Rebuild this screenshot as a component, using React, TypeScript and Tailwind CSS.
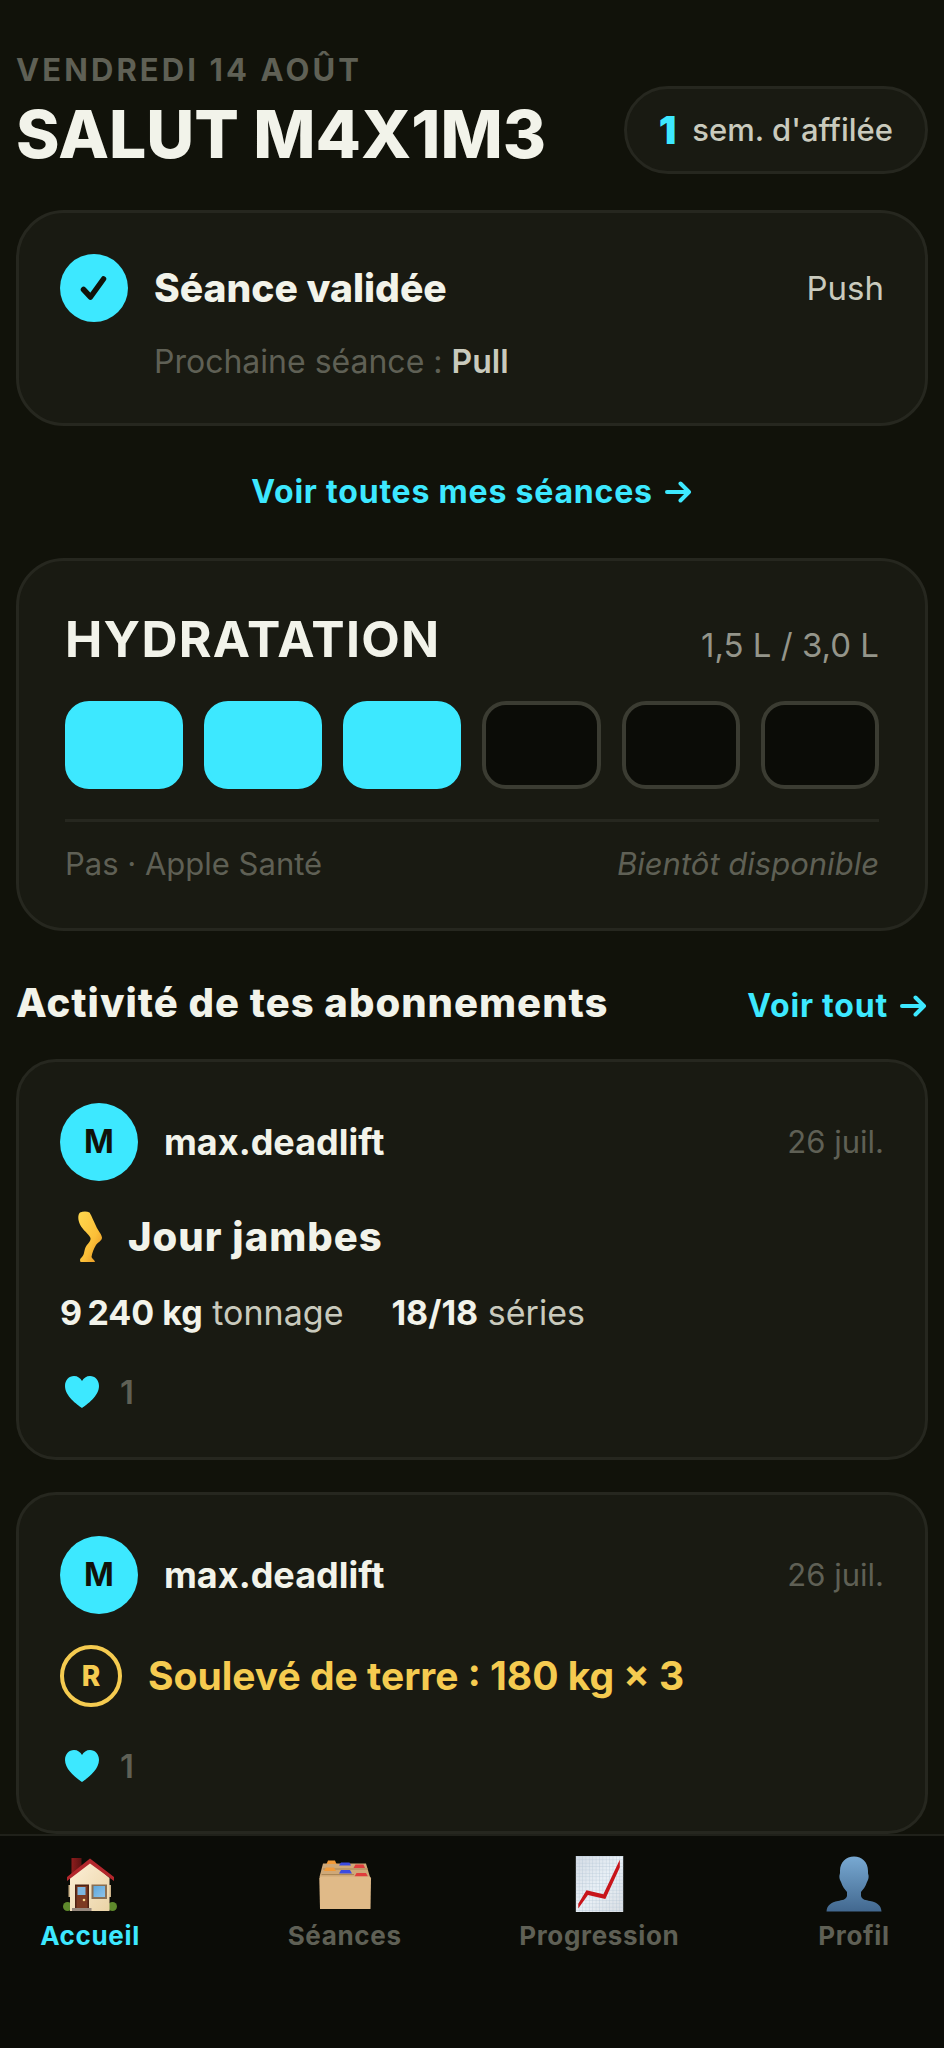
import type { ReactNode } from "react";
import clsx from "clsx";

const VERRES = 6;
const VERRES_BUS = 3;

interface Onglet {
  href: string;
  label: string;
  icon: () => ReactNode;
  actif?: boolean;
}

const ONGLETS: Onglet[] = [
  { href: "#accueil", label: "Accueil", icon: Maison, actif: true },
  { href: "#seances", label: "Séances", icon: Fichier },
  { href: "#progression", label: "Progression", icon: Courbe },
  { href: "#profil", label: "Profil", icon: Silhouette },
];

export default function App() {
  return (
    <div className="flex min-h-screen flex-col bg-[#11120a] font-['Inter',sans-serif] text-[#f2f3ea]">
      <main className="flex-1 px-4 pt-[50px]">
        <header className="flex items-end justify-between">
          <div>
            <p className="text-[31px] leading-10 font-bold tracking-widest text-[#5f6055] uppercase">
              Vendredi 14 août
            </p>
            <h1 className="mt-1 text-[66px] leading-20 font-extrabold whitespace-nowrap">
              SALUT M4X1M3
            </h1>
          </div>
          <p className="flex h-22 items-center gap-4 rounded-full border-3 border-[#26271f] bg-[#191a12] px-8 whitespace-nowrap">
            <span className="text-[39px] leading-10 font-black text-[#3de8ff]">1</span>
            <span className="text-[31px] leading-10 font-medium text-[#c9cabd]">sem. d'affilée</span>
          </p>
        </header>

        <section className="mt-9 rounded-[48px] border-3 border-[#26271f] bg-[#191a12] p-[41px]">
          <div className="flex items-center">
            <span className="grid size-17 place-items-center rounded-full bg-[#3de8ff]">
              <svg viewBox="0 0 68 68" className="size-17" aria-hidden="true">
                <path
                  d="M23.5 35.5 L30.5 43 L43.5 25"
                  fill="none"
                  stroke="#11120a"
                  strokeWidth="5.5"
                  strokeLinecap="round"
                  strokeLinejoin="round"
                />
              </svg>
            </span>
            <h2 className="ml-[26px] text-[39px] leading-12 font-extrabold">Séance validée</h2>
            <span className="ml-auto text-[33px] leading-10 text-[#c9cabd]">Push</span>
          </div>
          <p className="mt-5 ml-[94px] text-[32px] leading-10 text-[#5f6055]">
            Prochaine séance : <strong className="font-semibold text-[#c9cabd]">Pull</strong>
          </p>
        </section>

        <a
          href="#seances"
          className="mx-auto my-[46px] flex w-fit items-center gap-3 text-[32px] leading-10 font-bold tracking-wide text-[#3de8ff]"
        >
          Voir toutes mes séances
          <Fleche />
        </a>

        <section className="rounded-[48px] border-3 border-[#26271f] bg-[#191a12] px-[46px] pt-12 pb-11">
          <div className="flex items-baseline justify-between">
            <h2 className="text-[50px] leading-15 font-bold tracking-wide">HYDRATATION</h2>
            <span className="text-[33px] leading-10 text-[#94958a]">1,5 L / 3,0 L</span>
          </div>
          <div className="mt-8 grid grid-cols-6 gap-[21px]">
            {Array.from({ length: VERRES }, (_, i) => (
              <button
                key={i}
                type="button"
                aria-label={`Verre ${i + 1}`}
                aria-pressed={i < VERRES_BUS}
                className={clsx(
                  "h-22 rounded-3xl border-4",
                  i < VERRES_BUS ? "border-[#3de8ff] bg-[#3de8ff]" : "border-[#3b3c32] bg-[#0b0c07]",
                )}
              />
            ))}
          </div>
          <div className="mt-[30px] flex justify-between border-t-3 border-[#26271f] pt-[22px] text-[31px] leading-10 text-[#5f6055]">
            <span>Pas · Apple Santé</span>
            <em>Bientôt disponible</em>
          </div>
        </section>

        <div className="mt-12 mb-8 flex items-baseline justify-between">
          <h2 className="text-[40px] leading-12 font-extrabold tracking-wide">Activité de tes abonnements</h2>
          <a
            href="#activite"
            className="flex items-center gap-3 text-[32px] leading-10 font-bold tracking-wide text-[#3de8ff]"
          >
            Voir tout
            <Fleche />
          </a>
        </div>

        <div className="space-y-8">
          <Activite>
            <h3 className="mt-[30px] flex items-center gap-3 text-[40px] leading-12 font-extrabold tracking-wide">
              <Jambe />
              Jour jambes
            </h3>
            <p className="mt-[30px] flex gap-12 text-[34px] leading-10 text-[#c9cabd]">
              <span>
                <strong className="font-bold text-[#f2f3ea]">9{"\u202f"}240 kg</strong> tonnage
              </span>
              <span>
                <strong className="font-bold text-[#f2f3ea]">18/18</strong> séries
              </span>
            </p>
          </Activite>
          <Activite>
            <p className="mt-[31px] flex items-center gap-[26px] text-[39px] leading-12 font-bold text-[#f5cb50]">
              <span className="grid size-[62px] place-items-center rounded-full border-4 border-[#f5cb50] text-[28px] leading-8 font-extrabold">
                R
              </span>
              Soulevé de terre : 180 kg × 3
            </p>
          </Activite>
        </div>
      </main>

      <nav className="sticky bottom-0 flex justify-between border-t-2 border-[#20211a] bg-[#0b0c07] px-2 pt-5 pb-24">
        {ONGLETS.map(({ href, label, icon: Icone, actif }) => (
          <a
            key={href}
            href={href}
            aria-current={actif ? "page" : undefined}
            className={clsx(
              "flex w-41 flex-col items-center gap-2 text-[26px] leading-8 font-bold tracking-wide",
              actif ? "text-[#3de8ff]" : "text-[#5f6055]",
            )}
          >
            <Icone />
            {label}
          </a>
        ))}
      </nav>
    </div>
  );
}

// Carte du fil : auteur et date en haut, likes en bas.
function Activite({ children }: { children: ReactNode }) {
  return (
    <article className="rounded-[40px] border-3 border-[#26271f] bg-[#191a12] p-[41px]">
      <div className="flex items-center">
        <span className="grid size-[78px] place-items-center rounded-full bg-[#3de8ff] text-[32px] leading-10 font-bold text-[#11120a]">
          M
        </span>
        <span className="ml-[26px] text-[36px] leading-10 font-bold">max.deadlift</span>
        <time dateTime="07-26" className="ml-auto text-[31px] leading-10 text-[#5f6055]">
          26 juil.
        </time>
      </div>
      {children}
      <button
        type="button"
        aria-label="J'aime, 1"
        className="mt-[35px] flex h-12 items-center gap-5 pl-1 text-[33px] leading-10 font-semibold text-[#5f6055]"
      >
        <svg viewBox="0 0 36 34" className="h-[34px] w-9" aria-hidden="true">
          <path
            d="M18 33 C13 29.500 1 21 1 11 C1 5 5 1 10 1 C13.500 1 16.500 3 18 6 C19.500 3 22.500 1 26 1 C31 1 35 5 35 11 C35 21 23 29.500 18 33 Z"
            fill="#3de8ff"
          />
        </svg>
        1
      </button>
    </article>
  );
}

function Fleche() {
  return (
    <svg viewBox="0 0 28 22" className="h-[22px] w-7" aria-hidden="true">
      <path
        d="M2 11 H23 M15.500 2.500 L24 11 L15.500 19.500"
        fill="none"
        stroke="currentColor"
        strokeWidth="4"
        strokeLinecap="round"
        strokeLinejoin="round"
      />
    </svg>
  );
}

function Jambe() {
  return (
    <svg viewBox="0 0 56 52" className="h-13 w-14" aria-hidden="true">
      <defs>
        <linearGradient id="peau" x1="0" y1="0" x2="1" y2="1">
          <stop offset="0" stopColor="#ffd84f" />
          <stop offset="0.6" stopColor="#fbbf38" />
          <stop offset="1" stopColor="#e08a1e" />
        </linearGradient>
      </defs>
      <path
        d="M20 1.500 C23 0.200 27 0.200 29.500 1.500 C32 5.500 33.500 10 36 15 C38 19.500 41.500 23 42 26.500 C42 30 38 31 36 34 C34 37.500 32 42 31.500 46 C32 48 35 49 35 51 H20.500 C19.500 49 20 47.500 22 46 C24.500 44 24 39 26 35.500 C28 32 31 30.500 30.500 27 C29 23 22.500 19 20 13.500 C18 9 17.500 4 20 1.500 Z"
        fill="url(#peau)"
      />
    </svg>
  );
}

function Maison() {
  return (
    <svg viewBox="0 0 56 56" className="size-14" aria-hidden="true">
      <defs>
        <linearGradient id="mur" x1="0" y1="0" x2="1" y2="1">
          <stop offset="0" stopColor="#fdf0d8" />
          <stop offset="1" stopColor="#ead3a6" />
        </linearGradient>
        <linearGradient id="cheminee" x1="0" y1="0" x2="1" y2="0">
          <stop offset="0" stopColor="#8f1d1d" />
          <stop offset="1" stopColor="#5c1212" />
        </linearGradient>
        <linearGradient id="vitre" x1="0" y1="0" x2="1" y2="1">
          <stop offset="0" stopColor="#5fa8dc" />
          <stop offset="1" stopColor="#8cc2e8" />
        </linearGradient>
      </defs>
      <circle cx="5.500" cy="50.500" r="4.500" fill="#5f8a2c" />
      <circle cx="50.500" cy="50.500" r="4.500" fill="#5f8a2c" />
      <rect x="9.500" y="2" width="10" height="16" fill="url(#cheminee)" />
      <rect x="6.500" y="29" width="42.500" height="12" fill="#cdb48a" />
      <path d="M8 22 L28 5 L47.500 22 V55 H8 Z" fill="url(#mur)" />
      <path d="M5 21 L28 2.500 L52 21 V25 L28 7.500 L5 25 Z" fill="#b3272d" />
      <rect x="13" y="28.500" width="14" height="24.500" fill="#4e2314" />
      <rect x="14.500" y="30" width="11" height="23" fill="#7c3a22" />
      <rect x="15.500" y="31" width="8" height="8" fill="#7db6e0" />
      <circle cx="22" cy="44" r="1.300" fill="#f4d58a" />
      <rect x="10" y="52" width="19.500" height="3" fill="#97897e" />
      <rect x="29.500" y="28.500" width="15.500" height="14.500" fill="#8a6f52" />
      <rect x="31.500" y="30" width="11.500" height="11" fill="url(#vitre)" />
    </svg>
  );
}

function Fichier() {
  return (
    <svg viewBox="0 0 56 56" className="size-14" aria-hidden="true">
      <path d="M6 7.500 H49 L53 21 H2.500 Z" fill="#cfa877" />
      <path d="M9.500 8 L11 4.500 H18 L19.500 8 Z" fill="#f29a38" />
      <path d="M22 9.500 L24 6.500 H32.500 L34 9.500 Z" fill="#3c4be0" />
      <path d="M36.500 12 L38.500 8.500 H46.500 L48 12 Z" fill="#e03c3c" />
      <path d="M6 13 H51" stroke="#a98656" strokeWidth="1" />
      <path d="M7 15 L9 11.500 H17 L19 15 Z" fill="#f29a38" />
      <path d="M22 17.500 L24 14 H33 L35 17.500 Z" fill="#3c4be0" />
      <path d="M37.500 20.500 L39.500 17 H49 L51 20.500 Z" fill="#e03c3c" />
      <path d="M4.500 18.500 H37" stroke="#a98656" strokeWidth="1" />
      <path d="M4 20.500 H52 Q54 20.500 54 22.500 L53.500 53 H3 L2.300 22.500 Q2.300 20.500 4 20.500 Z" fill="#e0ba88" />
    </svg>
  );
}

function Courbe() {
  return (
    <svg viewBox="0 0 56 58" className="h-14" aria-hidden="true">
      <defs>
        <linearGradient id="papier" x1="0" y1="0" x2="1" y2="1">
          <stop offset="0" stopColor="#d3dbe4" />
          <stop offset="0.5" stopColor="#eaf1f7" />
          <stop offset="1" stopColor="#d9dee3" />
        </linearGradient>
        <pattern id="grille" width="3.500" height="3.500" patternUnits="userSpaceOnUse">
          <path d="M3.500 0 H0 V3.500" fill="none" stroke="#b4c6d4" strokeWidth="0.700" />
        </pattern>
      </defs>
      <rect x="4" y="0" width="49" height="58" fill="url(#papier)" />
      <rect x="4" y="0" width="49" height="58" fill="url(#grille)" />
      <path d="M6.500 49.500 L15 35.500 L32.500 39.500 L49.500 4 V12 L34.500 44.500 L16.500 40.500 L6.500 54.500 Z" fill="#c8141a" />
    </svg>
  );
}

function Silhouette() {
  return (
    <svg viewBox="0 0 56 56" className="size-14" aria-hidden="true">
      <defs>
        <linearGradient id="buste" x1="0" y1="0" x2="0" y2="1">
          <stop offset="0" stopColor="#78a9d2" />
          <stop offset="1" stopColor="#42688f" />
        </linearGradient>
      </defs>
      <path
        d="M28 0.500 C36 0.500 42 6 42 15 C42 17 42 18 42.500 19 C43 22 42 24 41 26 C39.500 31 37 33.500 35 36 V40 C36 44 40 44 44 45 C51 46.500 55 49 55.500 55.500 H0.500 C1 49 5 46.500 12 45 C16 44 20 44 21 40 V36 C19 33.500 16.500 31 15 26 C14 24 13 22 13.500 19 C14 18 14 17 14 15 C14 6 20 0.500 28 0.500 Z"
        fill="url(#buste)"
      />
    </svg>
  );
}
